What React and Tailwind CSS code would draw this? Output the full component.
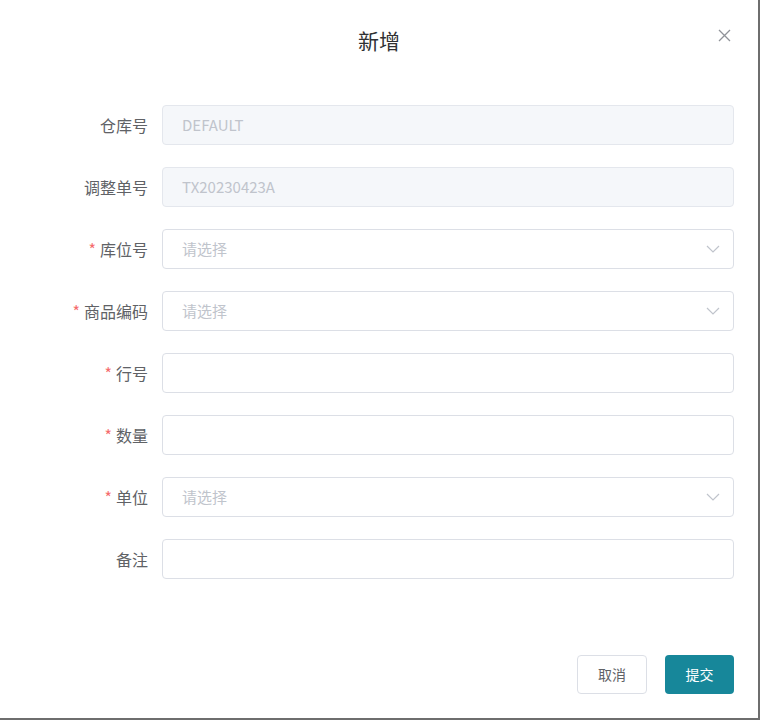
export default function App() {
  const rows = [
    { label: "仓库号", value: "DEFAULT", disabled: true },
    { label: "调整单号", value: "TX20230423A", disabled: true },
    { label: "库位号", req: true, select: true },
    { label: "商品编码", req: true, select: true },
    { label: "行号", req: true },
    { label: "数量", req: true },
    { label: "单位", req: true, select: true },
    { label: "备注" },
  ];
  const font = { fontFamily: '"Noto Sans CJK SC", "Liberation Sans", sans-serif' };
  return (
    <div className="w-[760px] h-[720px] bg-[#6e6e6e]" style={font}>
      <div className="w-[758px] h-[718px] bg-white relative">
        <div className="h-[80px] flex items-center justify-center text-[21px] text-[#303133] pt-[1px]">新增</div>
        <svg className="absolute left-[718px] top-[29px]" width="13" height="13" viewBox="0 0 13 13">
          <path d="M1 1L12 12M12 1L1 12" stroke="#909399" strokeWidth="1.3" />
        </svg>
        <div className="flex flex-col gap-[22px] pt-[25px]">
          {rows.map((r, i) => (
            <div key={i} className="flex items-center h-[40px]">
              <div className="w-[148px] text-right text-[16px] text-[#606266] pr-0">
                {r.req && <span className="text-[#f56c6c] mr-[4px]">*</span>}
                {r.label}
              </div>
              <div
                className={`ml-[14px] w-[572px] h-[40px] rounded-[4px] border flex items-center px-[19px] text-[15px] ${
                  r.disabled ? "bg-[#f5f7fa] border-[#e4e7ed] text-[#c0c4cc]" : "bg-white border-[#dcdfe6] text-[#c0c4cc]"
                }`}
              >
                <span className="flex-1">{r.value || (r.select ? "请选择" : "")}</span>
                {r.select && (
                  <svg width="14" height="8" viewBox="0 0 14 8" className="mr-[-6px]">
                    <path d="M1 1L7 7L13 1" fill="none" stroke="#c0c4cc" strokeWidth="1.2" />
                  </svg>
                )}
              </div>
            </div>
          ))}
        </div>
        <div className="absolute left-[577px] top-[655px] flex gap-[18px]">
          <div className="w-[70px] h-[39px] rounded-[4px] border border-[#dcdfe6] flex items-center justify-center text-[14px] text-[#606266]">取消</div>
          <div className="w-[69px] h-[39px] rounded-[4px] bg-[#17879a] flex items-center justify-center text-[14px] text-white">提交</div>
        </div>
      </div>
    </div>
  );
}
